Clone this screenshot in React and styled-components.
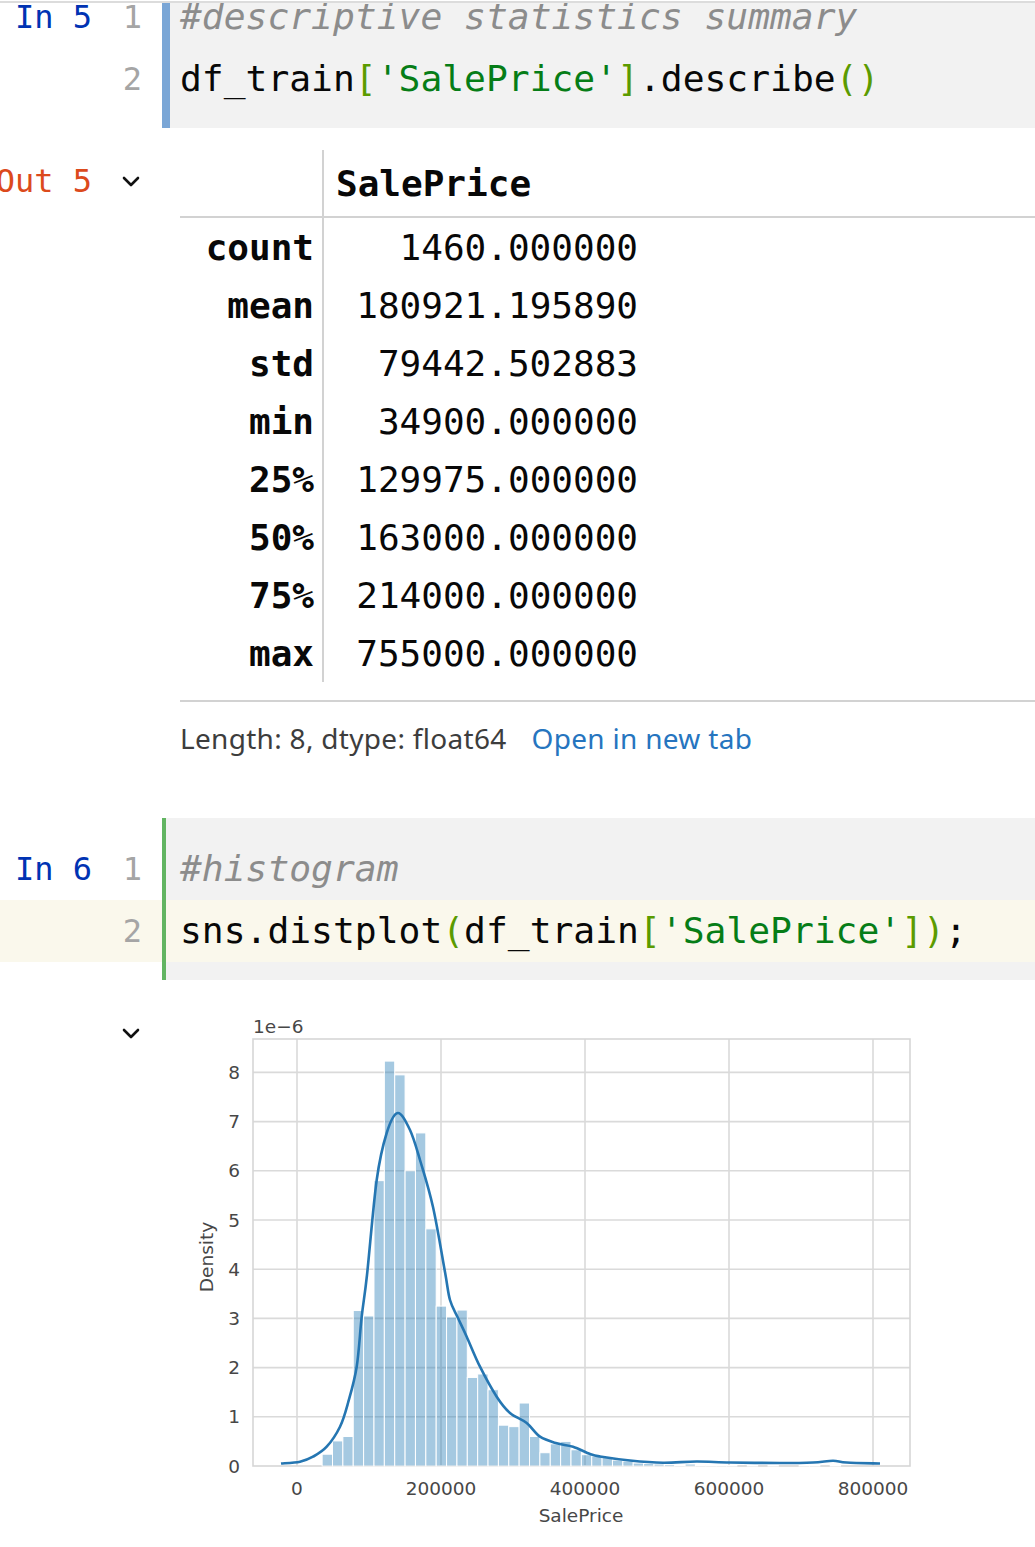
import styled, { createGlobalStyle } from "styled-components"

const GlobalStyle = createGlobalStyle`
  html, body {
    margin: 0;
    padding: 0;
    background: #ffffff;
  }
  body {
    font-family: "DejaVu Sans Mono", "Liberation Mono", monospace;
    overflow-x: hidden;
  }
`

const Notebook = styled.main`
  width: 1035px;
  overflow: hidden;
  padding-bottom: 10px;
`

const TopRule = styled.div`
  height: 2px;
  margin-top: 1px;
  background: #dcdcdc;
`

const Clip = styled.div`
  overflow: hidden;
`

const CodeCell = styled.section`
  display: grid;
  grid-template-columns: 162px 1fr;
  margin-top: ${(p) => p.$offset || 0}px;
`

const Gutter = styled.div`
  padding: 20px 0 18px;
`

const GutterRow = styled.div`
  display: grid;
  grid-template-columns: 92px 50px 20px;
  height: 62px;
  line-height: 62px;
  font-size: 32px;
  background: ${(p) => (p.$active ? "#faf8ec" : "transparent")};
`

const Prompt = styled.span`
  display: flex;
  justify-content: flex-end;
  white-space: pre;
  color: ${(p) => (p.$out ? "#dc4a1c" : "#0033b3")};
`

const LineNo = styled.span`
  text-align: right;
  color: #a5a5a5;
`

const Editor = styled.div`
  border-left: ${(p) => p.$bar}px solid ${(p) => p.$color};
  background: #f2f2f2;
  padding: 20px 0 18px;
`

const CodeLine = styled.div`
  height: 62px;
  line-height: 62px;
  font-size: 36.3px;
  white-space: pre;
  color: #080808;
  padding-left: ${(p) => p.$indent}px;
  background: ${(p) => (p.$active ? "#faf8ec" : "transparent")};
`

const Comment = styled.span`
  color: #8c8c8c;
  font-style: italic;
`

const Str = styled.span`
  color: #067d17;
`

const Brace = styled.span`
  color: #5b9b00;
`

const OutputRow = styled.section`
  display: grid;
  grid-template-columns: 92px 88px 1fr;
  align-items: start;
  padding-top: ${(p) => p.$top}px;
`

const OutPrompt = styled(Prompt)`
  height: 62px;
  line-height: 62px;
  font-size: 32px;
`

const Toggle = styled.div`
  grid-column: 2;
  height: ${(p) => p.$h}px;
  display: flex;
  align-items: center;
  padding-left: 30px;
`

const OutputBody = styled.div`
  grid-column: 3;
`

const Frame = styled.div`
  border-bottom: 2px solid #d2d2d2;
  padding-bottom: 18px;
`

const Table = styled.table`
  width: 100%;
  border-collapse: collapse;
  table-layout: fixed;
  font-size: 36px;
  color: #080808;
`

const IndexCol = styled.col`
  width: 143px;
`

const ValueCol = styled.col`
  width: 327px;
`

const HeadCell = styled.th`
  height: 66px;
  padding: 0 12px;
  text-align: left;
  font-weight: bold;
  border-bottom: 2px solid #d2d2d2;
  border-right: ${(p) => (p.$index ? "2px solid #d2d2d2" : "none")};
`

const IndexCell = styled.th`
  height: 58px;
  padding: 0 8px 0 0;
  text-align: right;
  font-weight: bold;
  border-right: 2px solid #d2d2d2;
`

const ValueCell = styled.td`
  height: 58px;
  padding: 0 12px 0 0;
  text-align: right;
`

const Meta = styled.div`
  display: flex;
  gap: 25px;
  padding-top: 20px;
  font-family: "Noto Sans", "Open Sans", sans-serif;
  font-size: 28px;
  letter-spacing: 0.3px;
  line-height: 32px;
  color: #3d3d3d;
`

const Link = styled.a`
  color: #2675bf;
  text-decoration: none;
`

const Spacer = styled.div`
  height: ${(p) => p.$h}px;
`

const Chevron = () => (
  <svg width="18" height="11" viewBox="0 0 18 11">
    <polyline points="2,2 9,9 16,2" fill="none" stroke="#111" strokeWidth="2.6" strokeLinecap="round" strokeLinejoin="round" />
  </svg>
)

const stats = [
  ["count", "1460.000000"],
  ["mean", "180921.195890"],
  ["std", "79442.502883"],
  ["min", "34900.000000"],
  ["25%", "129975.000000"],
  ["50%", "163000.000000"],
  ["75%", "214000.000000"],
  ["max", "755000.000000"],
]

// histogram densities (x 1e-6) for 50 bins from 34900 to 755000
const bins = [
  0.24, 0.51, 0.6, 3.16, 3.05, 5.8, 8.23, 7.95, 6.0, 6.77,
  4.82, 3.25, 3.03, 3.17, 1.8, 1.87, 1.55, 0.83, 0.8, 1.28,
  0.6, 0.27, 0.45, 0.5, 0.33, 0.23, 0.2, 0.17, 0.12, 0.1,
  0.06, 0.05, 0.04, 0.03, 0.02, 0.04, 0.02, 0.01, 0.01, 0.01,
  0, 0.01, 0, 0.01, 0, 0, 0.02, 0.01, 0, 0.02,
]

const kde = [
  [281, 1463.5], [300, 1461.7], [313, 1456.7], [326.7, 1446.7], [340, 1426.7],
  [348, 1403], [356.7, 1366.7], [361.7, 1316.7], [367, 1275], [376.7, 1180],
  [386.7, 1133], [397.7, 1113], [410, 1130], [420, 1160], [433, 1207],
  [445, 1272], [450, 1300], [458, 1318], [466.7, 1336.7], [480, 1366.7],
  [496.7, 1396.7], [510, 1413], [526.7, 1423], [540, 1436.7], [556.7, 1443.3],
  [573, 1446.7], [590, 1454], [600, 1456.5], [630, 1460.5], [663, 1462.7],
  [696.7, 1461.5], [730, 1462.5], [780, 1463], [813, 1462.5], [833, 1460.7],
  [846.7, 1462.5], [880, 1463.5],
]

const px = (v) => 297 + v * 0.00072
const py = (d) => 1466 - d * 49.2

const smooth = (pts) =>
  pts
    .map((p, i) => {
      if (i === 0) return `M${p[0]} ${p[1]}`
      const p0 = pts[i - 2] || pts[i - 1]
      const p1 = pts[i - 1]
      const p3 = pts[i + 1] || p
      const c1 = [p1[0] + (p[0] - p0[0]) / 6, p1[1] + (p[1] - p0[1]) / 6]
      const c2 = [p[0] - (p3[0] - p1[0]) / 6, p[1] - (p3[1] - p1[1]) / 6]
      return `C${c1[0]} ${c1[1]} ${c2[0]} ${c2[1]} ${p[0]} ${p[1]}`
    })
    .join(" ")

const tickFont = { fontFamily: "DejaVu Sans, sans-serif", fontSize: 18.5, fill: "#474747" }

const DistPlot = () => {
  const binW = 14402
  const xs = [0, 200000, 400000, 600000, 800000]
  const ys = [0, 1, 2, 3, 4, 5, 6, 7, 8]
  return (
    <svg width="760" height="540" viewBox="180 1005 760 540">
      {xs.map((v) => (
        <line key={v} x1={px(v)} x2={px(v)} y1={1039} y2={1466} stroke="#dadada" strokeWidth="1.6" />
      ))}
      {ys.slice(1).map((v) => (
        <line key={v} x1={253} x2={910} y1={py(v)} y2={py(v)} stroke="#dadada" strokeWidth="1.6" />
      ))}
      <rect x="253" y="1039" width="657" height="427" fill="none" stroke="#d6d6d6" strokeWidth="1.6" />
      {bins.map((d, i) => {
        if (!d) return null
        const x0 = px(34900 + i * binW)
        const w = px(34900 + (i + 1) * binW) - x0
        return (
          <rect key={i} x={x0} y={py(d)} width={w} height={1466 - py(d)} fill="#1f77b4" fillOpacity="0.4" stroke="#ffffff" strokeWidth="1" />
        )
      })}
      <path d={smooth(kde)} fill="none" stroke="#2576b2" strokeWidth="2.6" strokeLinejoin="round" />
      {ys.map((v) => (
        <text key={v} x="240" y={py(v) + 6.5} textAnchor="end" {...tickFont}>{v}</text>
      ))}
      {xs.map((v) => (
        <text key={v} x={px(v)} y="1495" textAnchor="middle" {...tickFont}>{v}</text>
      ))}
      <text x="253" y="1033" {...tickFont}>1e−6</text>
      <text x="581" y="1522" textAnchor="middle" {...tickFont}>SalePrice</text>
      <text x="213" y="1257" textAnchor="middle" transform="rotate(-90 213 1257)" {...tickFont}>Density</text>
    </svg>
  )
}

const App = () => {
  return (
    <Notebook>
      <GlobalStyle />
      <TopRule />
      <Clip>
        <CodeCell $offset={-37}>
          <Gutter>
            <GutterRow>
              <Prompt>In 5</Prompt>
              <LineNo>1</LineNo>
            </GutterRow>
            <GutterRow>
              <span />
              <LineNo>2</LineNo>
            </GutterRow>
          </Gutter>
          <Editor $bar={8} $color="#7aa6d6">
            <CodeLine $indent={10}>
              <Comment>#descriptive statistics summary</Comment>
            </CodeLine>
            <CodeLine $indent={10}>
              df_train<Brace>[</Brace><Str>'SalePrice'</Str><Brace>]</Brace>.describe<Brace>()</Brace>
            </CodeLine>
          </Editor>
        </CodeCell>
      </Clip>

      <OutputRow $top={22}>
        <OutPrompt $out>Out 5</OutPrompt>
        <Toggle $h={62}>
          <Chevron />
        </Toggle>
        <OutputBody>
          <Frame>
            <Table>
              <colgroup>
                <IndexCol />
                <ValueCol />
                <col />
              </colgroup>
              <thead>
                <tr>
                  <HeadCell $index />
                  <HeadCell>SalePrice</HeadCell>
                  <HeadCell />
                </tr>
              </thead>
              <tbody>
                {stats.map(([k, v]) => (
                  <tr key={k}>
                    <IndexCell>{k}</IndexCell>
                    <ValueCell>{v}</ValueCell>
                    <td />
                  </tr>
                ))}
              </tbody>
            </Table>
          </Frame>
          <Meta>
            <span>Length: 8, dtype: float64</span>
            <Link href="#">Open in new tab</Link>
          </Meta>
        </OutputBody>
      </OutputRow>

      <Spacer $h={64} />

      <CodeCell>
        <Gutter>
          <GutterRow>
            <Prompt>In 6</Prompt>
            <LineNo>1</LineNo>
          </GutterRow>
          <GutterRow $active>
            <span />
            <LineNo>2</LineNo>
          </GutterRow>
        </Gutter>
        <Editor $bar={4} $color="#62b562">
          <CodeLine $indent={14}>
            <Comment>#histogram</Comment>
          </CodeLine>
          <CodeLine $indent={14} $active>
            sns.distplot<Brace>(</Brace>df_train<Brace>[</Brace><Str>'SalePrice'</Str><Brace>])</Brace>;
          </CodeLine>
        </Editor>
      </CodeCell>

      <OutputRow $top={25}>
        <Toggle $h={56}>
          <Chevron />
        </Toggle>
        <OutputBody>
          <DistPlot />
        </OutputBody>
      </OutputRow>
    </Notebook>
  )
}

export default App
